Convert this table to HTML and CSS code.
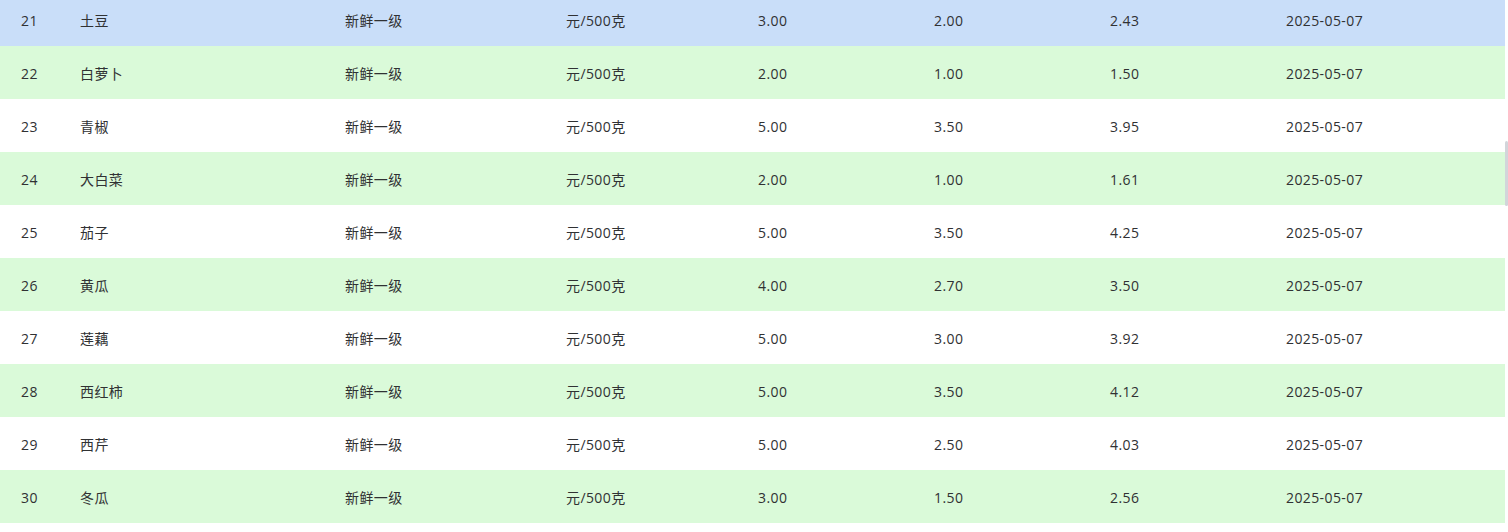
FILE: index.html
```html
<!DOCTYPE html>
<html lang="zh-CN">
<head>
<meta charset="utf-8">
<title>蔬菜价格</title>
<link rel="stylesheet" href="styles.css">
</head>
<body>
<div class="page">
  <div class="table">
    <div class="row current"><span>21</span><span>土豆</span><span>新鲜一级</span><span>元/500克</span><span>3.00</span><span>2.00</span><span>2.43</span><span>2025-05-07</span></div>
    <div class="row stripe"><span>22</span><span>白萝卜</span><span>新鲜一级</span><span>元/500克</span><span>2.00</span><span>1.00</span><span>1.50</span><span>2025-05-07</span></div>
    <div class="row"><span>23</span><span>青椒</span><span>新鲜一级</span><span>元/500克</span><span>5.00</span><span>3.50</span><span>3.95</span><span>2025-05-07</span></div>
    <div class="row stripe"><span>24</span><span>大白菜</span><span>新鲜一级</span><span>元/500克</span><span>2.00</span><span>1.00</span><span>1.61</span><span>2025-05-07</span></div>
    <div class="row"><span>25</span><span>茄子</span><span>新鲜一级</span><span>元/500克</span><span>5.00</span><span>3.50</span><span>4.25</span><span>2025-05-07</span></div>
    <div class="row stripe"><span>26</span><span>黄瓜</span><span>新鲜一级</span><span>元/500克</span><span>4.00</span><span>2.70</span><span>3.50</span><span>2025-05-07</span></div>
    <div class="row"><span>27</span><span>莲藕</span><span>新鲜一级</span><span>元/500克</span><span>5.00</span><span>3.00</span><span>3.92</span><span>2025-05-07</span></div>
    <div class="row stripe"><span>28</span><span>西红柿</span><span>新鲜一级</span><span>元/500克</span><span>5.00</span><span>3.50</span><span>4.12</span><span>2025-05-07</span></div>
    <div class="row"><span>29</span><span>西芹</span><span>新鲜一级</span><span>元/500克</span><span>5.00</span><span>2.50</span><span>4.03</span><span>2025-05-07</span></div>
    <div class="row stripe"><span>30</span><span>冬瓜</span><span>新鲜一级</span><span>元/500克</span><span>3.00</span><span>1.50</span><span>2.56</span><span>2025-05-07</span></div>
  </div>
  <div class="scrollbar"><div class="thumb"></div></div>
</div>
</body>
</html>
```

FILE: styles.css
```css
html, body {
  margin: 0;
  padding: 0;
  background: #ffffff;
  overflow: hidden;
}

.page {
  display: flex;
  width: 1508px;
  height: 532px;
  font-family: "Open Sans", "Noto Sans CJK SC", sans-serif;
  font-size: 14px;
  letter-spacing: 0.4px;
  color: #303133;
}

.table {
  width: 1505px;
  margin-top: -7px;
  display: flex;
  flex-direction: column;
}

.row {
  display: grid;
  grid-template-columns: 59px 265px 221px 192px 176px 176px 176px 1fr;
  align-items: center;
  height: 53px;
  padding-left: 21px;
  background: #ffffff;
}

.row span {
  white-space: nowrap;
  line-height: 23px;
  padding-top: 1px;
}

.row.stripe {
  background: #dafad9;
}

.row.current {
  background: #c9def9;
}

.scrollbar {
  width: 3px;
  padding-top: 141px;
}

.thumb {
  height: 65px;
  background: #d2d5da;
  border-radius: 2px;
}
```
